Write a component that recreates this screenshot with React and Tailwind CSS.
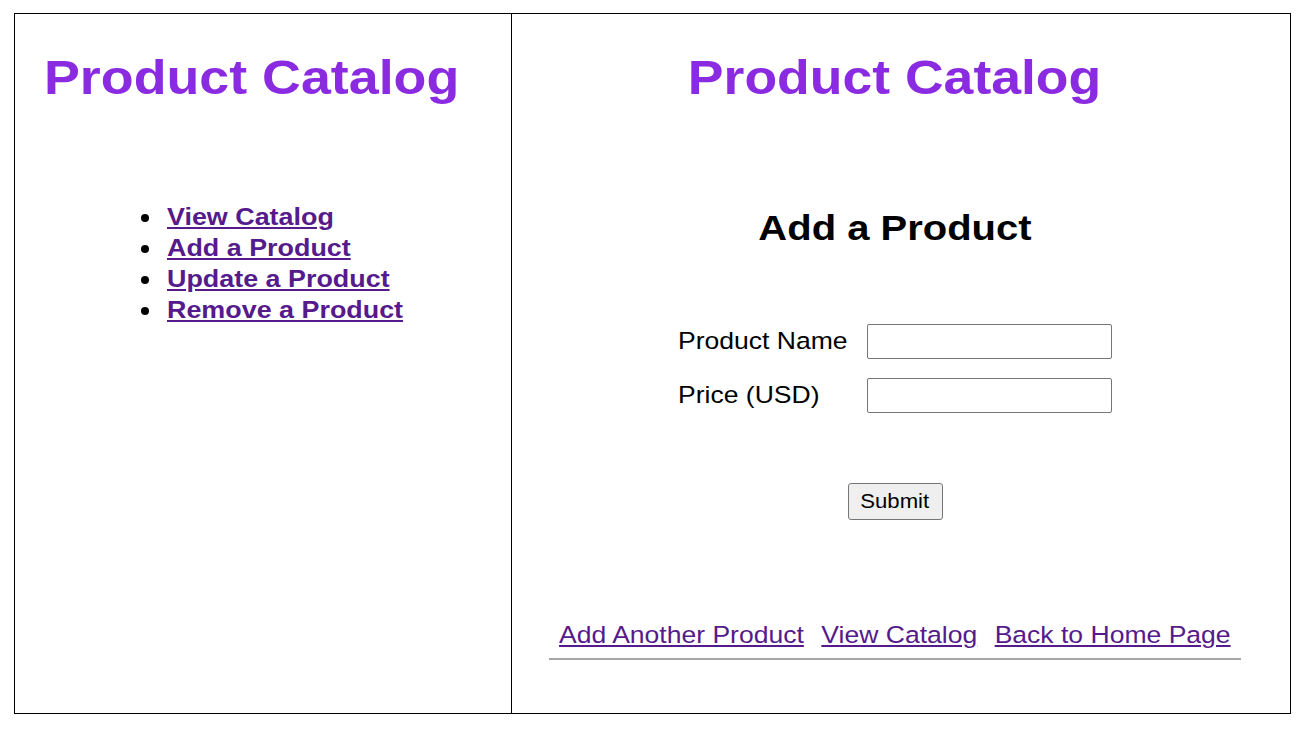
import React from 'react';

// Text in the shot is a bit wider than Arial, so stretch glyphs horizontally
const Wide = ({ children, className = '', scale = 'scale-x-[1.12]' }) => (
  <span className={`inline-block ${scale} ${className}`}>{children}</span>
);

const menuLinks = ['View Catalog', 'Add a Product', 'Update a Product', 'Remove a Product'];
const footerLinks = ['Add Another Product', 'View Catalog', 'Back to Home Page'];

function MenuItem({ label }) {
  return (
    <li className="flex items-start h-[31px] leading-[31px]">
      <span className="mt-[12px] w-[8px] h-[8px] rounded-full bg-black shrink-0" />
      <Wide scale="scale-x-[1.135]" className="origin-left ml-[18px]">
        <a href="#" className="font-bold text-[#551a8b] underline">
          {label}
        </a>
      </Wide>
    </li>
  );
}

export default function App() {
  return (
    <div className="w-[1306px] h-[732px] bg-white pt-[13px] pl-[14px] font-['Liberation_Sans',Arial,sans-serif] text-black">
      <div className="flex w-[1277px] h-[701px] border border-black">
        {/* Left: menu */}
        <div className="w-[497px] shrink-0 border-r border-black pl-[29px] pt-[40px]">
          <h1 className="text-[47.8px] leading-[48px] font-bold text-[#8a2be2]">
            <Wide scale="scale-x-[1.125]" className="origin-left">Product Catalog</Wide>
          </h1>
          <ul className="mt-[100px] ml-[97px] text-[23.7px]">
            {menuLinks.map(l => (
              <MenuItem key={l} label={l} />
            ))}
          </ul>
        </div>

        {/* Right: add product form */}
        <div className="flex-1 flex flex-col items-center pr-[12px] pt-[40px]">
          <h1 className="text-[47.8px] leading-[48px] font-bold text-[#8a2be2] text-center">
            <Wide className="origin-center">Product Catalog</Wide>
          </h1>
          <h2 className="mt-[107.6px] text-[35.7px] leading-[36px] font-bold text-center">
            <Wide className="origin-center">Add a Product</Wide>
          </h2>

          <form className="mt-[78.4px] grid grid-cols-[189px_245px] gap-y-[18px] items-center text-[23.7px]">
            <label>
              <Wide className="origin-left">Product Name</Wide>
            </label>
            <input type="text" className="h-[35px] w-[245px] border border-[#767676] rounded-[2px] bg-white" />
            <label>
              <Wide className="origin-left">Price (USD)</Wide>
            </label>
            <input type="text" className="h-[35px] w-[245px] border border-[#767676] rounded-[2px] bg-white" />
          </form>

          <button
            type="button"
            className="mt-[70px] h-[37px] w-[95px] bg-[#efefef] border border-[#767676] rounded-[3px] text-[19.75px] leading-none"
          >
            <Wide className="origin-center">Submit</Wide>
          </button>

          <div className="mt-[102.3px] w-[692px] flex justify-center pb-[9px] border-b-2 border-[#a6a6a6]">
            <div className="flex gap-[15.6px] scale-x-[1.12] origin-center text-[23.7px] leading-[27px]">
              {footerLinks.map(l => (
                <a key={l} href="#" className="text-[#551a8b] underline whitespace-nowrap">
                  {l}
                </a>
              ))}
            </div>
          </div>
        </div>
      </div>
    </div>
  );
}
